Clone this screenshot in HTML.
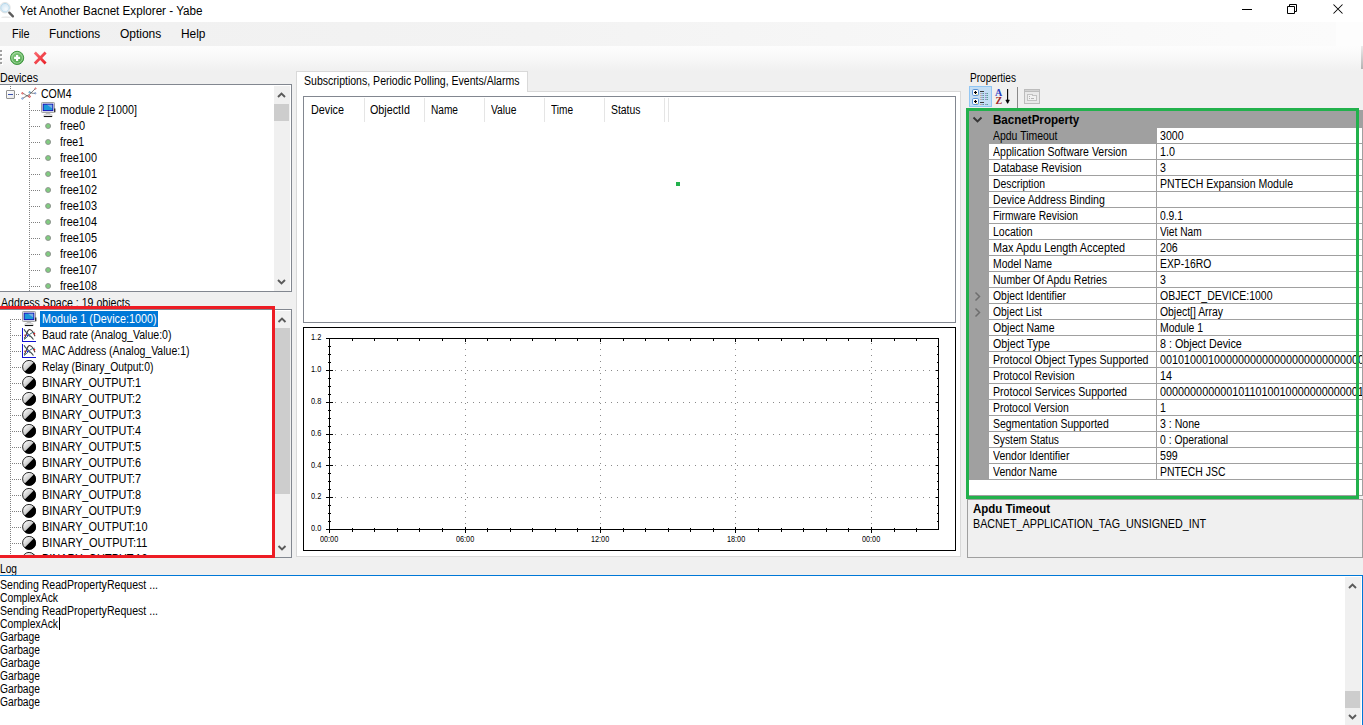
<!DOCTYPE html>
<html lang="en"><head><meta charset="utf-8"><title>Yet Another Bacnet Explorer - Yabe</title>
<style>
html,body{margin:0;padding:0}
body{width:1363px;height:725px;overflow:hidden;background:#f0f0f0;position:relative;
 font-family:"Liberation Sans",sans-serif;font-size:11px;color:#000}
.a{position:absolute}
.t{position:absolute;white-space:pre;display:block;transform-origin:0 0}
svg{position:absolute;overflow:visible}
</style></head>
<body>
<header class="a" style="left:0;top:0;width:1363px;height:22px;background:#fff"></header>
<svg style="left:0;top:0" width="16" height="20" viewBox="0 0 16 20">
<defs><radialGradient id="mg" cx="0.6" cy="0.65" r="0.7"><stop offset="0" stop-color="#f6fafd"/><stop offset="1" stop-color="#cfe4f2"/></radialGradient></defs>
<ellipse cx="6" cy="17.2" rx="5" ry="0.6" fill="#e4e4e4"/>
<circle cx="5" cy="7.7" r="5.2" fill="none" stroke="#e2e2e2" stroke-width="1"/>
<circle cx="5" cy="7.7" r="4.3" fill="url(#mg)" stroke="#b2d6ea" stroke-width="0.9"/>
<path d="M9.3 12.6 L12.9 16.4" stroke="#5c5c5c" stroke-width="2.3" stroke-linecap="round"/>
</svg>
<span class="t" style="left:19.65px;top:3.84px;font-size:12px;line-height:14px;transform:scaleX(0.9712);">Yet Another Bacnet Explorer - Yabe</span>
<svg style="left:1230px;top:0" width="133" height="22" viewBox="0 0 133 22" fill="none" stroke="#000" stroke-width="1">
<path d="M12 9.5 H22"/>
<path d="M57.5 6.5 H64.5 V13.5 H57.5 Z"/><path d="M59.5 6.5 V4.5 H66.5 V11.5 H64.5"/>
<path d="M103.5 4.5 L112.5 13.5 M112.5 4.5 L103.5 13.5" stroke-width="1.05"/>
</svg>
<nav class="a" style="left:0;top:22px;width:1336px;height:24px;background:linear-gradient(90deg,#f0f0f0 0%,#f3f3f3 40%,#fbfbfb 100%)"></nav>
<div class="a" style="left:1336px;top:22px;width:27px;height:24px;background:#fdfdfd"></div>
<span class="t" style="left:12.25px;top:26.84px;font-size:12px;line-height:14px;transform:scaleX(0.9099);">File</span>
<span class="t" style="left:49.25px;top:26.84px;font-size:12px;line-height:14px;transform:scaleX(0.9840);">Functions</span>
<span class="t" style="left:119.95px;top:26.84px;font-size:12px;line-height:14px;">Options</span>
<span class="t" style="left:181.35px;top:26.84px;font-size:12px;line-height:14px;transform:scaleX(0.9924);">Help</span>
<div class="a" style="left:0px;top:46px;width:1363px;height:25px;background:linear-gradient(180deg,#fdfdfd 0%,#f9f9f9 40%,#f0f0f0 100%)"></div>
<div class="a" style="left:1361px;top:46px;width:2px;height:23px;background:linear-gradient(180deg,#ececec,#b2b2b2)"></div>
<svg style="left:0;top:50px" width="4" height="16" viewBox="0 0 4 16" shape-rendering="crispEdges"><rect x="1" y="1" width="2" height="2" fill="#fff"/><rect x="0" y="0" width="2" height="2" fill="#a0a0a0"/><rect x="1" y="5" width="2" height="2" fill="#fff"/><rect x="0" y="4" width="2" height="2" fill="#a0a0a0"/><rect x="1" y="9" width="2" height="2" fill="#fff"/><rect x="0" y="8" width="2" height="2" fill="#a0a0a0"/><rect x="1" y="13" width="2" height="2" fill="#fff"/><rect x="0" y="12" width="2" height="2" fill="#a0a0a0"/></svg>
<svg style="left:9px;top:50px" width="16" height="16" viewBox="0 0 16 16">
<defs><linearGradient id="gg" x1="0" y1="0" x2="0.6" y2="1"><stop offset="0" stop-color="#8fd08a"/><stop offset="1" stop-color="#4da64a"/></linearGradient></defs>
<circle cx="8.1" cy="7.9" r="6.6" fill="url(#gg)" stroke="#3f973f" stroke-width="1"/>
<circle cx="8.1" cy="7.9" r="5.3" fill="none" stroke="#c9ebc5" stroke-width="0.6"/>
<path d="M8.1 4.9 V10.9 M5.1 7.9 H11.1" stroke="#fff" stroke-width="2.2"/>
</svg>
<svg style="left:33px;top:51px" width="14" height="14" viewBox="0 0 14 14">
<defs><linearGradient id="rg" x1="0" y1="0" x2="1" y2="1"><stop offset="0" stop-color="#fb7379"/><stop offset="1" stop-color="#e81a22"/></linearGradient></defs>
<path d="M0.8 2.6 L2.8 0.6 L7.2 5 L11.6 0.6 L13.6 2.6 L9.2 7 L13.6 11.4 L11.6 13.4 L7.2 9 L2.8 13.4 L0.8 11.4 L5.2 7 Z" fill="url(#rg)"/>
</svg>
<span class="t" style="left:0.15px;top:70.84px;font-size:12px;line-height:14px;transform:scaleX(0.8902);">Devices</span>
<section class="a" style="left:-1px;top:84px;width:293px;height:208px;box-sizing:border-box;border:1px solid #828790;background:#fff;overflow:hidden"></section>
<div class="a" style="left:0;top:85px;width:274px;height:206px;overflow:hidden"><div class="a" style="left:0;top:-85px;width:274px;height:400px">
<div class="a" style="left:10px;top:86px;width:1px;height:4px;background:repeating-linear-gradient(180deg,#808080 0 1px,transparent 1px 2px)"></div>
<div class="a" style="left:6px;top:90px;width:9px;height:9px;box-sizing:border-box;border:1px solid #919191;background:linear-gradient(135deg,#fff,#e6e6e6);border-radius:1px"></div>
<div class="a" style="left:8px;top:94px;width:5px;height:1px;background:#3b52b0"></div>
<div class="a" style="left:16px;top:94px;width:4px;height:1px;background:repeating-linear-gradient(90deg,#808080 0 1px,transparent 1px 2px)"></div>
<svg style="left:20px;top:86px" width="18" height="16" viewBox="0 0 18 16" fill="none">
<path d="M2.4 7.3 C5 7.6 6.5 10.6 9.5 10.5 M9.6 6.3 C11 6.8 12.5 7.6 15.3 7.3" stroke="#5a5a5a" stroke-width="0.8"/>
<path d="M2.4 12.5 L9.5 8.4 L15.5 2.5" stroke="#5a5a5a" stroke-width="0.8"/>
<circle cx="2.4" cy="7.3" r="0.8" fill="#fbb" stroke="#c33" stroke-width="0.6"/>
<circle cx="9.5" cy="10.5" r="0.9" fill="#fbb" stroke="#c22" stroke-width="0.7"/>
<circle cx="15.5" cy="2.5" r="0.7" fill="#fcc" stroke="#c44" stroke-width="0.6"/>
<circle cx="9.6" cy="6.3" r="0.8" fill="#bdf" stroke="#38a" stroke-width="0.6"/>
<circle cx="2.4" cy="12.5" r="0.8" fill="#cdf" stroke="#57b" stroke-width="0.6"/>
<circle cx="15.3" cy="7.3" r="0.7" fill="#cdf" stroke="#57b" stroke-width="0.6"/>
</svg>
<span class="t" style="left:41.15px;top:86.84px;font-size:12px;line-height:14px;transform:scaleX(0.8797);">COM4</span>
<div class="a" style="left:29px;top:102px;width:1px;height:190px;background:repeating-linear-gradient(180deg,#808080 0 1px,transparent 1px 2px)"></div>
<div class="a" style="left:31px;top:110px;width:10px;height:1px;background:repeating-linear-gradient(90deg,#808080 0 1px,transparent 1px 2px)"></div>
<svg style="left:41px;top:102px" width="15" height="16" viewBox="0 0 15 16">
<rect x="0.5" y="0.5" width="13" height="10" rx="0.8" fill="#e9e9e9" stroke="#a2a2a2"/>
<rect x="2.2" y="2.2" width="9.6" height="6.4" fill="#1b98d8" stroke="#1414b8" stroke-width="1"/>
<path d="M6 2.8 H11.2 V6.6 Z" fill="#9fb4e6" opacity="0.75"/>
<path d="M13.8 6.6 V10.2" stroke="#111" stroke-width="1.1"/>
<path d="M5 11 H9 L9.6 12.8 H4.4 Z" fill="#c4c4c4"/>
<ellipse cx="7" cy="13.3" rx="4.4" ry="1.2" fill="#f4f4f4" stroke="#aaa" stroke-width="0.5"/>
<path d="M2.8 14.5 H11.2" stroke="#111" stroke-width="1.1"/>
</svg>
<span class="t" style="left:59.65px;top:102.84px;font-size:12px;line-height:14px;transform:scaleX(0.8947);">module 2 [1000]</span>
<div class="a" style="left:31px;top:126px;width:10px;height:1px;background:repeating-linear-gradient(90deg,#808080 0 1px,transparent 1px 2px)"></div>
<svg style="left:44px;top:122px" width="8" height="8" viewBox="0 0 8 8"><circle cx="4.1" cy="4" r="2.5" fill="#80cc80" stroke="#8f8f8f" stroke-width="0.9"/></svg>
<span class="t" style="left:59.65px;top:118.84px;font-size:12px;line-height:14px;transform:scaleX(0.9138);">free0</span>
<div class="a" style="left:31px;top:142px;width:10px;height:1px;background:repeating-linear-gradient(90deg,#808080 0 1px,transparent 1px 2px)"></div>
<svg style="left:44px;top:138px" width="8" height="8" viewBox="0 0 8 8"><circle cx="4.1" cy="4" r="2.5" fill="#80cc80" stroke="#8f8f8f" stroke-width="0.9"/></svg>
<span class="t" style="left:59.65px;top:134.84px;font-size:12px;line-height:14px;transform:scaleX(0.8772);">free1</span>
<div class="a" style="left:31px;top:158px;width:10px;height:1px;background:repeating-linear-gradient(90deg,#808080 0 1px,transparent 1px 2px)"></div>
<svg style="left:44px;top:154px" width="8" height="8" viewBox="0 0 8 8"><circle cx="4.1" cy="4" r="2.5" fill="#80cc80" stroke="#8f8f8f" stroke-width="0.9"/></svg>
<span class="t" style="left:59.65px;top:150.84px;font-size:12px;line-height:14px;transform:scaleX(0.9090);">free100</span>
<div class="a" style="left:31px;top:174px;width:10px;height:1px;background:repeating-linear-gradient(90deg,#808080 0 1px,transparent 1px 2px)"></div>
<svg style="left:44px;top:170px" width="8" height="8" viewBox="0 0 8 8"><circle cx="4.1" cy="4" r="2.5" fill="#80cc80" stroke="#8f8f8f" stroke-width="0.9"/></svg>
<span class="t" style="left:59.65px;top:166.84px;font-size:12px;line-height:14px;transform:scaleX(0.9090);">free101</span>
<div class="a" style="left:31px;top:190px;width:10px;height:1px;background:repeating-linear-gradient(90deg,#808080 0 1px,transparent 1px 2px)"></div>
<svg style="left:44px;top:186px" width="8" height="8" viewBox="0 0 8 8"><circle cx="4.1" cy="4" r="2.5" fill="#80cc80" stroke="#8f8f8f" stroke-width="0.9"/></svg>
<span class="t" style="left:59.65px;top:182.84px;font-size:12px;line-height:14px;transform:scaleX(0.9090);">free102</span>
<div class="a" style="left:31px;top:206px;width:10px;height:1px;background:repeating-linear-gradient(90deg,#808080 0 1px,transparent 1px 2px)"></div>
<svg style="left:44px;top:202px" width="8" height="8" viewBox="0 0 8 8"><circle cx="4.1" cy="4" r="2.5" fill="#80cc80" stroke="#8f8f8f" stroke-width="0.9"/></svg>
<span class="t" style="left:59.65px;top:198.84px;font-size:12px;line-height:14px;transform:scaleX(0.9090);">free103</span>
<div class="a" style="left:31px;top:222px;width:10px;height:1px;background:repeating-linear-gradient(90deg,#808080 0 1px,transparent 1px 2px)"></div>
<svg style="left:44px;top:218px" width="8" height="8" viewBox="0 0 8 8"><circle cx="4.1" cy="4" r="2.5" fill="#80cc80" stroke="#8f8f8f" stroke-width="0.9"/></svg>
<span class="t" style="left:59.65px;top:214.84px;font-size:12px;line-height:14px;transform:scaleX(0.9090);">free104</span>
<div class="a" style="left:31px;top:238px;width:10px;height:1px;background:repeating-linear-gradient(90deg,#808080 0 1px,transparent 1px 2px)"></div>
<svg style="left:44px;top:234px" width="8" height="8" viewBox="0 0 8 8"><circle cx="4.1" cy="4" r="2.5" fill="#80cc80" stroke="#8f8f8f" stroke-width="0.9"/></svg>
<span class="t" style="left:59.65px;top:230.84px;font-size:12px;line-height:14px;transform:scaleX(0.9090);">free105</span>
<div class="a" style="left:31px;top:254px;width:10px;height:1px;background:repeating-linear-gradient(90deg,#808080 0 1px,transparent 1px 2px)"></div>
<svg style="left:44px;top:250px" width="8" height="8" viewBox="0 0 8 8"><circle cx="4.1" cy="4" r="2.5" fill="#80cc80" stroke="#8f8f8f" stroke-width="0.9"/></svg>
<span class="t" style="left:59.65px;top:246.84px;font-size:12px;line-height:14px;transform:scaleX(0.9090);">free106</span>
<div class="a" style="left:31px;top:270px;width:10px;height:1px;background:repeating-linear-gradient(90deg,#808080 0 1px,transparent 1px 2px)"></div>
<svg style="left:44px;top:266px" width="8" height="8" viewBox="0 0 8 8"><circle cx="4.1" cy="4" r="2.5" fill="#80cc80" stroke="#8f8f8f" stroke-width="0.9"/></svg>
<span class="t" style="left:59.65px;top:262.84px;font-size:12px;line-height:14px;transform:scaleX(0.9090);">free107</span>
<div class="a" style="left:31px;top:286px;width:10px;height:1px;background:repeating-linear-gradient(90deg,#808080 0 1px,transparent 1px 2px)"></div>
<svg style="left:44px;top:282px" width="8" height="8" viewBox="0 0 8 8"><circle cx="4.1" cy="4" r="2.5" fill="#80cc80" stroke="#8f8f8f" stroke-width="0.9"/></svg>
<span class="t" style="left:59.65px;top:278.84px;font-size:12px;line-height:14px;transform:scaleX(0.9090);">free108</span>
</div></div>
<div class="a" style="left:274px;top:86px;width:16px;height:205px;background:#f0f0f0"></div>
<div class="a" style="left:274px;top:104px;width:15px;height:17px;background:#cdcdcd"></div>
<svg style="left:0;top:0" width="1" height="1"><path d="M278.0 97 L281.5 93.5 L285.0 97" stroke="#5a5a5a" stroke-width="1.9" fill="none"/></svg>
<svg style="left:0;top:0" width="1" height="1"><path d="M278.0 280 L281.5 283.5 L285.0 280" stroke="#5a5a5a" stroke-width="1.9" fill="none"/></svg>
<span class="t" style="left:0.65px;top:295.84px;font-size:12px;line-height:14px;transform:scaleX(0.8830);">Address Space : 19 objects</span>
<section class="a" style="left:-1px;top:309px;width:293px;height:249px;box-sizing:border-box;border:1px solid #828790;background:#fff"></section>
<div class="a" style="left:0;top:310px;width:275px;height:247px;overflow:hidden"><div class="a" style="left:0;top:-310px;width:275px;height:700px">
<div class="a" style="left:10px;top:319px;width:1px;height:241px;background:repeating-linear-gradient(180deg,#808080 0 1px,transparent 1px 2px)"></div>
<div class="a" style="left:12px;top:319px;width:10px;height:1px;background:repeating-linear-gradient(90deg,#808080 0 1px,transparent 1px 2px)"></div>
<svg style="left:22px;top:311px" width="15" height="16" viewBox="0 0 15 16">
<rect x="0.5" y="0.5" width="13" height="10" rx="0.8" fill="#e9e9e9" stroke="#a2a2a2"/>
<rect x="2.2" y="2.2" width="9.6" height="6.4" fill="#1b98d8" stroke="#1414b8" stroke-width="1"/>
<path d="M6 2.8 H11.2 V6.6 Z" fill="#9fb4e6" opacity="0.75"/>
<path d="M13.8 6.6 V10.2" stroke="#111" stroke-width="1.1"/>
<path d="M5 11 H9 L9.6 12.8 H4.4 Z" fill="#c4c4c4"/>
<ellipse cx="7" cy="13.3" rx="4.4" ry="1.2" fill="#f4f4f4" stroke="#aaa" stroke-width="0.5"/>
<path d="M2.8 14.5 H11.2" stroke="#111" stroke-width="1.1"/>
</svg>
<div class="a" style="left:40px;top:311px;width:118px;height:16px;background:#0078d7"></div>
<span class="t" style="left:42.15px;top:311.84px;font-size:12px;line-height:14px;transform:scaleX(0.8987);color:#fff;">Module 1 (Device:1000)</span>
<div class="a" style="left:12px;top:335px;width:10px;height:1px;background:repeating-linear-gradient(90deg,#808080 0 1px,transparent 1px 2px)"></div>
<svg style="left:22px;top:327.5px" width="15" height="15" viewBox="0 0 15 15" fill="none">
<path d="M0.5 0 V13.5 H14" stroke="#1212d2" stroke-width="1" shape-rendering="crispEdges"/>
<path d="M2 10.5 C4 9.5 5 2 7.2 1.6 S11 3.5 13 8.2" stroke="#4a3a3a" stroke-width="1.1"/>
<path d="M2 1.2 C3.5 5 8 6.5 11.2 11.2" stroke="#3f5a5a" stroke-width="1.1"/>
<path d="M2 11.4 C5 10.6 7 4.6 12.6 4.2" stroke="#3b6f78" stroke-width="1"/>
<path d="M7 8.2 C8.6 8 10 9.6 11.4 11.6" stroke="#555" stroke-width="0.9"/>
<circle cx="5.6" cy="7.4" r="0.9" fill="#2222e0"/><circle cx="12.4" cy="5.6" r="0.9" fill="#e02222"/><circle cx="3" cy="7.2" r="0.8" fill="#b02020"/>
</svg>
<span class="t" style="left:42.15px;top:327.84px;font-size:12px;line-height:14px;transform:scaleX(0.8796);">Baud rate (Analog_Value:0)</span>
<div class="a" style="left:12px;top:351px;width:10px;height:1px;background:repeating-linear-gradient(90deg,#808080 0 1px,transparent 1px 2px)"></div>
<svg style="left:22px;top:343.5px" width="15" height="15" viewBox="0 0 15 15" fill="none">
<path d="M0.5 0 V13.5 H14" stroke="#1212d2" stroke-width="1" shape-rendering="crispEdges"/>
<path d="M2 10.5 C4 9.5 5 2 7.2 1.6 S11 3.5 13 8.2" stroke="#4a3a3a" stroke-width="1.1"/>
<path d="M2 1.2 C3.5 5 8 6.5 11.2 11.2" stroke="#3f5a5a" stroke-width="1.1"/>
<path d="M2 11.4 C5 10.6 7 4.6 12.6 4.2" stroke="#3b6f78" stroke-width="1"/>
<path d="M7 8.2 C8.6 8 10 9.6 11.4 11.6" stroke="#555" stroke-width="0.9"/>
<circle cx="5.6" cy="7.4" r="0.9" fill="#2222e0"/><circle cx="12.4" cy="5.6" r="0.9" fill="#e02222"/><circle cx="3" cy="7.2" r="0.8" fill="#b02020"/>
</svg>
<span class="t" style="left:42.15px;top:343.84px;font-size:12px;line-height:14px;transform:scaleX(0.8751);">MAC Address (Analog_Value:1)</span>
<div class="a" style="left:12px;top:367px;width:10px;height:1px;background:repeating-linear-gradient(90deg,#808080 0 1px,transparent 1px 2px)"></div>
<svg style="left:22px;top:360px;overflow:hidden" width="15" height="15" viewBox="0 0 15 15">
<defs><linearGradient id="bg22360" x1="0" y1="0" x2="1" y2="1"><stop offset="0.1" stop-color="#ffffff"/><stop offset="0.5" stop-color="#c8c8c8"/></linearGradient></defs>
<circle cx="7.1" cy="6.9" r="6.5" fill="url(#bg22360)" stroke="#111" stroke-width="0.9"/>
<path d="M12 2.3 A6.6 6.6 0 0 1 2.5 11.8 Z" fill="#000"/>
</svg>
<span class="t" style="left:42.15px;top:359.84px;font-size:12px;line-height:14px;transform:scaleX(0.8661);">Relay (Binary_Output:0)</span>
<div class="a" style="left:12px;top:383px;width:10px;height:1px;background:repeating-linear-gradient(90deg,#808080 0 1px,transparent 1px 2px)"></div>
<svg style="left:22px;top:376px;overflow:hidden" width="15" height="15" viewBox="0 0 15 15">
<defs><linearGradient id="bg22376" x1="0" y1="0" x2="1" y2="1"><stop offset="0.1" stop-color="#ffffff"/><stop offset="0.5" stop-color="#c8c8c8"/></linearGradient></defs>
<circle cx="7.1" cy="6.9" r="6.5" fill="url(#bg22376)" stroke="#111" stroke-width="0.9"/>
<path d="M12 2.3 A6.6 6.6 0 0 1 2.5 11.8 Z" fill="#000"/>
</svg>
<span class="t" style="left:42.15px;top:375.84px;font-size:12px;line-height:14px;transform:scaleX(0.9070);">BINARY_OUTPUT:1</span>
<div class="a" style="left:12px;top:399px;width:10px;height:1px;background:repeating-linear-gradient(90deg,#808080 0 1px,transparent 1px 2px)"></div>
<svg style="left:22px;top:392px;overflow:hidden" width="15" height="15" viewBox="0 0 15 15">
<defs><linearGradient id="bg22392" x1="0" y1="0" x2="1" y2="1"><stop offset="0.1" stop-color="#ffffff"/><stop offset="0.5" stop-color="#c8c8c8"/></linearGradient></defs>
<circle cx="7.1" cy="6.9" r="6.5" fill="url(#bg22392)" stroke="#111" stroke-width="0.9"/>
<path d="M12 2.3 A6.6 6.6 0 0 1 2.5 11.8 Z" fill="#000"/>
</svg>
<span class="t" style="left:42.15px;top:391.84px;font-size:12px;line-height:14px;transform:scaleX(0.9070);">BINARY_OUTPUT:2</span>
<div class="a" style="left:12px;top:415px;width:10px;height:1px;background:repeating-linear-gradient(90deg,#808080 0 1px,transparent 1px 2px)"></div>
<svg style="left:22px;top:408px;overflow:hidden" width="15" height="15" viewBox="0 0 15 15">
<defs><linearGradient id="bg22408" x1="0" y1="0" x2="1" y2="1"><stop offset="0.1" stop-color="#ffffff"/><stop offset="0.5" stop-color="#c8c8c8"/></linearGradient></defs>
<circle cx="7.1" cy="6.9" r="6.5" fill="url(#bg22408)" stroke="#111" stroke-width="0.9"/>
<path d="M12 2.3 A6.6 6.6 0 0 1 2.5 11.8 Z" fill="#000"/>
</svg>
<span class="t" style="left:42.15px;top:407.84px;font-size:12px;line-height:14px;transform:scaleX(0.9070);">BINARY_OUTPUT:3</span>
<div class="a" style="left:12px;top:431px;width:10px;height:1px;background:repeating-linear-gradient(90deg,#808080 0 1px,transparent 1px 2px)"></div>
<svg style="left:22px;top:424px;overflow:hidden" width="15" height="15" viewBox="0 0 15 15">
<defs><linearGradient id="bg22424" x1="0" y1="0" x2="1" y2="1"><stop offset="0.1" stop-color="#ffffff"/><stop offset="0.5" stop-color="#c8c8c8"/></linearGradient></defs>
<circle cx="7.1" cy="6.9" r="6.5" fill="url(#bg22424)" stroke="#111" stroke-width="0.9"/>
<path d="M12 2.3 A6.6 6.6 0 0 1 2.5 11.8 Z" fill="#000"/>
</svg>
<span class="t" style="left:42.15px;top:423.84px;font-size:12px;line-height:14px;transform:scaleX(0.9070);">BINARY_OUTPUT:4</span>
<div class="a" style="left:12px;top:447px;width:10px;height:1px;background:repeating-linear-gradient(90deg,#808080 0 1px,transparent 1px 2px)"></div>
<svg style="left:22px;top:440px;overflow:hidden" width="15" height="15" viewBox="0 0 15 15">
<defs><linearGradient id="bg22440" x1="0" y1="0" x2="1" y2="1"><stop offset="0.1" stop-color="#ffffff"/><stop offset="0.5" stop-color="#c8c8c8"/></linearGradient></defs>
<circle cx="7.1" cy="6.9" r="6.5" fill="url(#bg22440)" stroke="#111" stroke-width="0.9"/>
<path d="M12 2.3 A6.6 6.6 0 0 1 2.5 11.8 Z" fill="#000"/>
</svg>
<span class="t" style="left:42.15px;top:439.84px;font-size:12px;line-height:14px;transform:scaleX(0.9070);">BINARY_OUTPUT:5</span>
<div class="a" style="left:12px;top:463px;width:10px;height:1px;background:repeating-linear-gradient(90deg,#808080 0 1px,transparent 1px 2px)"></div>
<svg style="left:22px;top:456px;overflow:hidden" width="15" height="15" viewBox="0 0 15 15">
<defs><linearGradient id="bg22456" x1="0" y1="0" x2="1" y2="1"><stop offset="0.1" stop-color="#ffffff"/><stop offset="0.5" stop-color="#c8c8c8"/></linearGradient></defs>
<circle cx="7.1" cy="6.9" r="6.5" fill="url(#bg22456)" stroke="#111" stroke-width="0.9"/>
<path d="M12 2.3 A6.6 6.6 0 0 1 2.5 11.8 Z" fill="#000"/>
</svg>
<span class="t" style="left:42.15px;top:455.84px;font-size:12px;line-height:14px;transform:scaleX(0.9070);">BINARY_OUTPUT:6</span>
<div class="a" style="left:12px;top:479px;width:10px;height:1px;background:repeating-linear-gradient(90deg,#808080 0 1px,transparent 1px 2px)"></div>
<svg style="left:22px;top:472px;overflow:hidden" width="15" height="15" viewBox="0 0 15 15">
<defs><linearGradient id="bg22472" x1="0" y1="0" x2="1" y2="1"><stop offset="0.1" stop-color="#ffffff"/><stop offset="0.5" stop-color="#c8c8c8"/></linearGradient></defs>
<circle cx="7.1" cy="6.9" r="6.5" fill="url(#bg22472)" stroke="#111" stroke-width="0.9"/>
<path d="M12 2.3 A6.6 6.6 0 0 1 2.5 11.8 Z" fill="#000"/>
</svg>
<span class="t" style="left:42.15px;top:471.84px;font-size:12px;line-height:14px;transform:scaleX(0.9070);">BINARY_OUTPUT:7</span>
<div class="a" style="left:12px;top:495px;width:10px;height:1px;background:repeating-linear-gradient(90deg,#808080 0 1px,transparent 1px 2px)"></div>
<svg style="left:22px;top:488px;overflow:hidden" width="15" height="15" viewBox="0 0 15 15">
<defs><linearGradient id="bg22488" x1="0" y1="0" x2="1" y2="1"><stop offset="0.1" stop-color="#ffffff"/><stop offset="0.5" stop-color="#c8c8c8"/></linearGradient></defs>
<circle cx="7.1" cy="6.9" r="6.5" fill="url(#bg22488)" stroke="#111" stroke-width="0.9"/>
<path d="M12 2.3 A6.6 6.6 0 0 1 2.5 11.8 Z" fill="#000"/>
</svg>
<span class="t" style="left:42.15px;top:487.84px;font-size:12px;line-height:14px;transform:scaleX(0.9070);">BINARY_OUTPUT:8</span>
<div class="a" style="left:12px;top:511px;width:10px;height:1px;background:repeating-linear-gradient(90deg,#808080 0 1px,transparent 1px 2px)"></div>
<svg style="left:22px;top:504px;overflow:hidden" width="15" height="15" viewBox="0 0 15 15">
<defs><linearGradient id="bg22504" x1="0" y1="0" x2="1" y2="1"><stop offset="0.1" stop-color="#ffffff"/><stop offset="0.5" stop-color="#c8c8c8"/></linearGradient></defs>
<circle cx="7.1" cy="6.9" r="6.5" fill="url(#bg22504)" stroke="#111" stroke-width="0.9"/>
<path d="M12 2.3 A6.6 6.6 0 0 1 2.5 11.8 Z" fill="#000"/>
</svg>
<span class="t" style="left:42.15px;top:503.84px;font-size:12px;line-height:14px;transform:scaleX(0.9070);">BINARY_OUTPUT:9</span>
<div class="a" style="left:12px;top:527px;width:10px;height:1px;background:repeating-linear-gradient(90deg,#808080 0 1px,transparent 1px 2px)"></div>
<svg style="left:22px;top:520px;overflow:hidden" width="15" height="15" viewBox="0 0 15 15">
<defs><linearGradient id="bg22520" x1="0" y1="0" x2="1" y2="1"><stop offset="0.1" stop-color="#ffffff"/><stop offset="0.5" stop-color="#c8c8c8"/></linearGradient></defs>
<circle cx="7.1" cy="6.9" r="6.5" fill="url(#bg22520)" stroke="#111" stroke-width="0.9"/>
<path d="M12 2.3 A6.6 6.6 0 0 1 2.5 11.8 Z" fill="#000"/>
</svg>
<span class="t" style="left:42.15px;top:519.84px;font-size:12px;line-height:14px;transform:scaleX(0.9108);">BINARY_OUTPUT:10</span>
<div class="a" style="left:12px;top:543px;width:10px;height:1px;background:repeating-linear-gradient(90deg,#808080 0 1px,transparent 1px 2px)"></div>
<svg style="left:22px;top:536px;overflow:hidden" width="15" height="15" viewBox="0 0 15 15">
<defs><linearGradient id="bg22536" x1="0" y1="0" x2="1" y2="1"><stop offset="0.1" stop-color="#ffffff"/><stop offset="0.5" stop-color="#c8c8c8"/></linearGradient></defs>
<circle cx="7.1" cy="6.9" r="6.5" fill="url(#bg22536)" stroke="#111" stroke-width="0.9"/>
<path d="M12 2.3 A6.6 6.6 0 0 1 2.5 11.8 Z" fill="#000"/>
</svg>
<span class="t" style="left:42.15px;top:535.84px;font-size:12px;line-height:14px;transform:scaleX(0.9179);">BINARY_OUTPUT:11</span>
<div class="a" style="left:12px;top:559px;width:10px;height:1px;background:repeating-linear-gradient(90deg,#808080 0 1px,transparent 1px 2px)"></div>
<svg style="left:22px;top:552px;overflow:hidden" width="15" height="15" viewBox="0 0 15 15">
<defs><linearGradient id="bg22552" x1="0" y1="0" x2="1" y2="1"><stop offset="0.1" stop-color="#ffffff"/><stop offset="0.5" stop-color="#c8c8c8"/></linearGradient></defs>
<circle cx="7.1" cy="6.9" r="6.5" fill="url(#bg22552)" stroke="#111" stroke-width="0.9"/>
<path d="M12 2.3 A6.6 6.6 0 0 1 2.5 11.8 Z" fill="#000"/>
</svg>
<span class="t" style="left:42.15px;top:551.84px;font-size:12px;line-height:14px;transform:scaleX(0.9108);">BINARY_OUTPUT:12</span>
</div></div>
<div class="a" style="left:275px;top:311px;width:16px;height:246px;background:#f0f0f0"></div>
<div class="a" style="left:275px;top:328px;width:15px;height:166px;background:#cdcdcd"></div>
<svg style="left:0;top:0" width="1" height="1"><path d="M278.5 322 L282 318.5 L285.5 322" stroke="#5a5a5a" stroke-width="1.9" fill="none"/></svg>
<svg style="left:0;top:0" width="1" height="1"><path d="M278.5 546 L282 549.5 L285.5 546" stroke="#5a5a5a" stroke-width="1.9" fill="none"/></svg>
<div class="a" style="left:-3px;top:306px;width:278px;height:252px;box-sizing:border-box;border:3px solid #ed1c24"></div>
<main class="a" style="left:296px;top:91px;width:665px;height:466px;box-sizing:border-box;border:1px solid #d9d9d9;background:#fff"></main>
<div class="a" style="left:296px;top:71px;width:232px;height:21px;box-sizing:border-box;border:1px solid #d9d9d9;border-bottom:none;background:#fff"></div>
<span class="t" style="left:303.65px;top:73.84px;font-size:12px;line-height:14px;transform:scaleX(0.8780);">Subscriptions, Periodic Polling, Events/Alarms</span>
<div class="a" style="left:303px;top:96px;width:653px;height:227px;box-sizing:border-box;border:1px solid #828790;background:#fff"></div>
<div class="a" style="left:364px;top:98px;width:1px;height:24px;background:#e5e5e5"></div>
<div class="a" style="left:424px;top:98px;width:1px;height:24px;background:#e5e5e5"></div>
<div class="a" style="left:484px;top:98px;width:1px;height:24px;background:#e5e5e5"></div>
<div class="a" style="left:544px;top:98px;width:1px;height:24px;background:#e5e5e5"></div>
<div class="a" style="left:604px;top:98px;width:1px;height:24px;background:#e5e5e5"></div>
<div class="a" style="left:664px;top:98px;width:1px;height:24px;background:#e5e5e5"></div>
<div class="a" style="left:668px;top:98px;width:1px;height:24px;background:#e5e5e5"></div>
<span class="t" style="left:311.15px;top:102.84px;font-size:12px;line-height:14px;transform:scaleX(0.8995);">Device</span>
<span class="t" style="left:369.95px;top:102.84px;font-size:12px;line-height:14px;transform:scaleX(0.8948);">ObjectId</span>
<span class="t" style="left:430.85px;top:102.84px;font-size:12px;line-height:14px;transform:scaleX(0.8433);">Name</span>
<span class="t" style="left:491.15px;top:102.84px;font-size:12px;line-height:14px;transform:scaleX(0.8553);">Value</span>
<span class="t" style="left:550.85px;top:102.84px;font-size:12px;line-height:14px;transform:scaleX(0.8386);">Time</span>
<span class="t" style="left:610.65px;top:102.84px;font-size:12px;line-height:14px;transform:scaleX(0.8669);">Status</span>
<div class="a" style="left:676px;top:182px;width:4px;height:4px;background:#22b14c"></div>
<div class="a" style="left:303px;top:327px;width:653px;height:224px;box-sizing:border-box;border:1px solid #000;background:#fff"></div>
<svg style="left:0;top:0" width="1363" height="725" viewBox="0 0 1363 725" shape-rendering="crispEdges"><path d="M334.5 370.3 H935.5" stroke="#8a8a8a" stroke-width="1" stroke-dasharray="1 5"/><path d="M334.5 402.2 H935.5" stroke="#8a8a8a" stroke-width="1" stroke-dasharray="1 5"/><path d="M334.5 434.0 H935.5" stroke="#8a8a8a" stroke-width="1" stroke-dasharray="1 5"/><path d="M334.5 465.8 H935.5" stroke="#8a8a8a" stroke-width="1" stroke-dasharray="1 5"/><path d="M334.5 497.7 H935.5" stroke="#8a8a8a" stroke-width="1" stroke-dasharray="1 5"/><path d="M465.0 342.5 V526.5" stroke="#8a8a8a" stroke-width="1" stroke-dasharray="1 5"/><path d="M600.5 342.5 V526.5" stroke="#8a8a8a" stroke-width="1" stroke-dasharray="1 5"/><path d="M735.9 342.5 V526.5" stroke="#8a8a8a" stroke-width="1" stroke-dasharray="1 5"/><path d="M871.4 342.5 V526.5" stroke="#8a8a8a" stroke-width="1" stroke-dasharray="1 5"/><path d="M329.5 338.5 H938.5 V529.5 H329.5 Z" fill="none" stroke="#000" stroke-width="1"/><path d="M326.0 338.5 H333.0" stroke="#000" stroke-width="1"/><path d="M935.5 338.5 H938.5" stroke="#000" stroke-width="1"/><path d="M328.0 346.5 H331.0" stroke="#000" stroke-width="1"/><path d="M936.5 346.5 H938.5" stroke="#000" stroke-width="1"/><path d="M328.0 354.4 H331.0" stroke="#000" stroke-width="1"/><path d="M936.5 354.4 H938.5" stroke="#000" stroke-width="1"/><path d="M328.0 362.4 H331.0" stroke="#000" stroke-width="1"/><path d="M936.5 362.4 H938.5" stroke="#000" stroke-width="1"/><path d="M326.0 370.3 H333.0" stroke="#000" stroke-width="1"/><path d="M935.5 370.3 H938.5" stroke="#000" stroke-width="1"/><path d="M328.0 378.3 H331.0" stroke="#000" stroke-width="1"/><path d="M936.5 378.3 H938.5" stroke="#000" stroke-width="1"/><path d="M328.0 386.2 H331.0" stroke="#000" stroke-width="1"/><path d="M936.5 386.2 H938.5" stroke="#000" stroke-width="1"/><path d="M328.0 394.2 H331.0" stroke="#000" stroke-width="1"/><path d="M936.5 394.2 H938.5" stroke="#000" stroke-width="1"/><path d="M326.0 402.2 H333.0" stroke="#000" stroke-width="1"/><path d="M935.5 402.2 H938.5" stroke="#000" stroke-width="1"/><path d="M328.0 410.1 H331.0" stroke="#000" stroke-width="1"/><path d="M936.5 410.1 H938.5" stroke="#000" stroke-width="1"/><path d="M328.0 418.1 H331.0" stroke="#000" stroke-width="1"/><path d="M936.5 418.1 H938.5" stroke="#000" stroke-width="1"/><path d="M328.0 426.0 H331.0" stroke="#000" stroke-width="1"/><path d="M936.5 426.0 H938.5" stroke="#000" stroke-width="1"/><path d="M326.0 434.0 H333.0" stroke="#000" stroke-width="1"/><path d="M935.5 434.0 H938.5" stroke="#000" stroke-width="1"/><path d="M328.0 442.0 H331.0" stroke="#000" stroke-width="1"/><path d="M936.5 442.0 H938.5" stroke="#000" stroke-width="1"/><path d="M328.0 449.9 H331.0" stroke="#000" stroke-width="1"/><path d="M936.5 449.9 H938.5" stroke="#000" stroke-width="1"/><path d="M328.0 457.9 H331.0" stroke="#000" stroke-width="1"/><path d="M936.5 457.9 H938.5" stroke="#000" stroke-width="1"/><path d="M326.0 465.8 H333.0" stroke="#000" stroke-width="1"/><path d="M935.5 465.8 H938.5" stroke="#000" stroke-width="1"/><path d="M328.0 473.8 H331.0" stroke="#000" stroke-width="1"/><path d="M936.5 473.8 H938.5" stroke="#000" stroke-width="1"/><path d="M328.0 481.8 H331.0" stroke="#000" stroke-width="1"/><path d="M936.5 481.8 H938.5" stroke="#000" stroke-width="1"/><path d="M328.0 489.7 H331.0" stroke="#000" stroke-width="1"/><path d="M936.5 489.7 H938.5" stroke="#000" stroke-width="1"/><path d="M326.0 497.7 H333.0" stroke="#000" stroke-width="1"/><path d="M935.5 497.7 H938.5" stroke="#000" stroke-width="1"/><path d="M328.0 505.6 H331.0" stroke="#000" stroke-width="1"/><path d="M936.5 505.6 H938.5" stroke="#000" stroke-width="1"/><path d="M328.0 513.6 H331.0" stroke="#000" stroke-width="1"/><path d="M936.5 513.6 H938.5" stroke="#000" stroke-width="1"/><path d="M328.0 521.5 H331.0" stroke="#000" stroke-width="1"/><path d="M936.5 521.5 H938.5" stroke="#000" stroke-width="1"/><path d="M326.0 529.5 H333.0" stroke="#000" stroke-width="1"/><path d="M935.5 529.5 H938.5" stroke="#000" stroke-width="1"/><path d="M329.5 526.5 V532.5" stroke="#000" stroke-width="1"/><path d="M329.5 338.5 V341.5" stroke="#000" stroke-width="1"/><path d="M352.1 527.5 V531.5" stroke="#000" stroke-width="1"/><path d="M352.1 338.5 V340.5" stroke="#000" stroke-width="1"/><path d="M374.7 527.5 V531.5" stroke="#000" stroke-width="1"/><path d="M374.7 338.5 V340.5" stroke="#000" stroke-width="1"/><path d="M397.2 527.5 V531.5" stroke="#000" stroke-width="1"/><path d="M397.2 338.5 V340.5" stroke="#000" stroke-width="1"/><path d="M419.8 527.5 V531.5" stroke="#000" stroke-width="1"/><path d="M419.8 338.5 V340.5" stroke="#000" stroke-width="1"/><path d="M442.4 527.5 V531.5" stroke="#000" stroke-width="1"/><path d="M442.4 338.5 V340.5" stroke="#000" stroke-width="1"/><path d="M465.0 526.5 V532.5" stroke="#000" stroke-width="1"/><path d="M465.0 338.5 V341.5" stroke="#000" stroke-width="1"/><path d="M487.6 527.5 V531.5" stroke="#000" stroke-width="1"/><path d="M487.6 338.5 V340.5" stroke="#000" stroke-width="1"/><path d="M510.1 527.5 V531.5" stroke="#000" stroke-width="1"/><path d="M510.1 338.5 V340.5" stroke="#000" stroke-width="1"/><path d="M532.7 527.5 V531.5" stroke="#000" stroke-width="1"/><path d="M532.7 338.5 V340.5" stroke="#000" stroke-width="1"/><path d="M555.3 527.5 V531.5" stroke="#000" stroke-width="1"/><path d="M555.3 338.5 V340.5" stroke="#000" stroke-width="1"/><path d="M577.9 527.5 V531.5" stroke="#000" stroke-width="1"/><path d="M577.9 338.5 V340.5" stroke="#000" stroke-width="1"/><path d="M600.5 526.5 V532.5" stroke="#000" stroke-width="1"/><path d="M600.5 338.5 V341.5" stroke="#000" stroke-width="1"/><path d="M623.0 527.5 V531.5" stroke="#000" stroke-width="1"/><path d="M623.0 338.5 V340.5" stroke="#000" stroke-width="1"/><path d="M645.6 527.5 V531.5" stroke="#000" stroke-width="1"/><path d="M645.6 338.5 V340.5" stroke="#000" stroke-width="1"/><path d="M668.2 527.5 V531.5" stroke="#000" stroke-width="1"/><path d="M668.2 338.5 V340.5" stroke="#000" stroke-width="1"/><path d="M690.8 527.5 V531.5" stroke="#000" stroke-width="1"/><path d="M690.8 338.5 V340.5" stroke="#000" stroke-width="1"/><path d="M713.3 527.5 V531.5" stroke="#000" stroke-width="1"/><path d="M713.3 338.5 V340.5" stroke="#000" stroke-width="1"/><path d="M735.9 526.5 V532.5" stroke="#000" stroke-width="1"/><path d="M735.9 338.5 V341.5" stroke="#000" stroke-width="1"/><path d="M758.5 527.5 V531.5" stroke="#000" stroke-width="1"/><path d="M758.5 338.5 V340.5" stroke="#000" stroke-width="1"/><path d="M781.1 527.5 V531.5" stroke="#000" stroke-width="1"/><path d="M781.1 338.5 V340.5" stroke="#000" stroke-width="1"/><path d="M803.7 527.5 V531.5" stroke="#000" stroke-width="1"/><path d="M803.7 338.5 V340.5" stroke="#000" stroke-width="1"/><path d="M826.2 527.5 V531.5" stroke="#000" stroke-width="1"/><path d="M826.2 338.5 V340.5" stroke="#000" stroke-width="1"/><path d="M848.8 527.5 V531.5" stroke="#000" stroke-width="1"/><path d="M848.8 338.5 V340.5" stroke="#000" stroke-width="1"/><path d="M871.4 526.5 V532.5" stroke="#000" stroke-width="1"/><path d="M871.4 338.5 V341.5" stroke="#000" stroke-width="1"/><path d="M894.0 527.5 V531.5" stroke="#000" stroke-width="1"/><path d="M894.0 338.5 V340.5" stroke="#000" stroke-width="1"/><path d="M916.6 527.5 V531.5" stroke="#000" stroke-width="1"/><path d="M916.6 338.5 V340.5" stroke="#000" stroke-width="1"/></svg>
<span class="t" style="left:311px;top:332.25px;font-size:8.5px;line-height:10px;transform:scaleX(0.8708);">1.2</span>
<span class="t" style="left:311px;top:364.09px;font-size:8.5px;line-height:10px;transform:scaleX(0.8708);">1.0</span>
<span class="t" style="left:311px;top:395.92px;font-size:8.5px;line-height:10px;transform:scaleX(0.8708);">0.8</span>
<span class="t" style="left:311px;top:427.75px;font-size:8.5px;line-height:10px;transform:scaleX(0.8708);">0.6</span>
<span class="t" style="left:311px;top:459.59px;font-size:8.5px;line-height:10px;transform:scaleX(0.8708);">0.4</span>
<span class="t" style="left:311px;top:491.42px;font-size:8.5px;line-height:10px;transform:scaleX(0.8708);">0.2</span>
<span class="t" style="left:311px;top:523.25px;font-size:8.5px;line-height:10px;transform:scaleX(0.8708);">0.0</span>
<span class="t" style="left:320.3px;top:534.05px;font-size:8.5px;line-height:10px;transform:scaleX(0.8552);">00:00</span>
<span class="t" style="left:455.775px;top:534.05px;font-size:8.5px;line-height:10px;transform:scaleX(0.8552);">06:00</span>
<span class="t" style="left:591.25px;top:534.05px;font-size:8.5px;line-height:10px;transform:scaleX(0.8552);">12:00</span>
<span class="t" style="left:726.725px;top:534.05px;font-size:8.5px;line-height:10px;transform:scaleX(0.8552);">18:00</span>
<span class="t" style="left:862.2px;top:534.05px;font-size:8.5px;line-height:10px;transform:scaleX(0.8552);">00:00</span>
<span class="t" style="left:969.65px;top:70.84px;font-size:12px;line-height:14px;transform:scaleX(0.8409);">Properties</span>
<div class="a" style="left:969px;top:86px;width:23px;height:21px;box-sizing:border-box;border:1px solid #92c6f3;background:#c4def4"></div>
<svg style="left:972px;top:89px" width="18" height="17" viewBox="0 0 18 17">
<rect x="0.5" y="0.5" width="6" height="6" rx="1.3" fill="#fff" stroke="#5b93d6" stroke-width="1"/><path d="M2 3.5 H5 M3.5 2 V5" stroke="#000" stroke-width="1.2"/><rect x="4.2" y="5" width="1.6" height="0.9" fill="#ecd873"/>
<rect x="0.5" y="9.5" width="6" height="6" rx="1.3" fill="#fff" stroke="#5b93d6" stroke-width="1"/><path d="M2 12.5 H5 M3.5 11 V14" stroke="#000" stroke-width="1.2"/><rect x="4.2" y="14" width="1.6" height="0.9" fill="#ecd873"/>
<path d="M8 2.5 H12 M8 13.5 H12" stroke="#3c3c3c" stroke-width="1"/>
<g stroke-width="1">
<path d="M8 4.5 H9.4 M8 6.5 H9.4 M8 8.5 H9.4 M8 10.5 H9.4 M8 15.5 H9.4" stroke="#c4b48e"/><path d="M9.4 4.5 H10.8 M9.4 6.5 H10.8 M9.4 8.5 H10.8 M9.4 10.5 H10.8 M9.4 15.5 H10.8" stroke="#9c88c6"/><path d="M10.8 4.5 H12 M10.8 6.5 H12 M10.8 8.5 H12 M10.8 10.5 H12 M10.8 15.5 H12" stroke="#5ba596"/>
<path d="M13 4.5 H14.6 M13 6.5 H14.6 M13 8.5 H14.6 M13 10.5 H14.6 M13 15.5 H14.6" stroke="#9c88c6"/><path d="M14.6 4.5 H16 M14.6 6.5 H16 M14.6 8.5 H16 M14.6 10.5 H16 M14.6 15.5 H16" stroke="#5ba596"/>
</g>
</svg>
<span class="t" style="left:995px;top:86.53px;font-size:10px;line-height:12px;font-weight:bold;color:#2a3fc0;font-family:'Liberation Serif',serif;">A</span>
<span class="t" style="left:995.6px;top:94.53px;font-size:10px;line-height:12px;font-weight:bold;color:#a02828;font-family:'Liberation Serif',serif;">Z</span>
<svg style="left:1003px;top:88px" width="9" height="18" viewBox="0 0 9 18"><path d="M4.6 1 V15" stroke="#000" stroke-width="1.1"/><path d="M2.8 12 L4.6 15.4 L6.4 12 Z" stroke="#000" stroke-width="0.6" fill="#000"/></svg>
<div class="a" style="left:1017px;top:87px;width:1px;height:21px;background:#8a8a8a"></div>
<svg style="left:1024px;top:89px" width="17" height="16" viewBox="0 0 17 16" shape-rendering="crispEdges">
<rect x="0.5" y="0.5" width="15" height="14" fill="#e9e9e9" stroke="#bcbcbc"/>
<rect x="0.5" y="0.5" width="15" height="2" fill="#d2d2d2" stroke="#bcbcbc"/>
<path d="M3.5 6.5 V5.5 H8.5 V6.5 H12.5 V11.5 H3.5 Z" fill="#f1f1f1" stroke="#c2c2c2"/>
<path d="M5 7.5 H6 M5 9.5 H6 M7 9.5 H10" stroke="#b4b4b4"/>
</svg>
<div class="a" style="left:967px;top:110px;width:396px;height:386px;box-sizing:border-box;border:1px solid #a0a0a0;background:#fff"></div>
<div class="a" style="left:968px;top:111px;width:394px;height:17px;background:#a0a0a0"></div>
<div class="a" style="left:968px;top:128px;width:21px;height:352px;background:#a0a0a0"></div>
<div class="a" style="left:989px;top:128px;width:168px;height:16px;background:#a0a0a0"></div>
<div class="a" style="left:1156px;top:128px;width:1px;height:352px;background:#a0a0a0"></div>
<svg style="left:0;top:0" width="1" height="1"><path d="M973.5 117.5 L977.5 121.5 L981.5 117.5" stroke="#363636" stroke-width="1.9" fill="none"/></svg>
<span class="t" style="left:993.15px;top:112.84px;font-size:12px;line-height:14px;transform:scaleX(0.9656);font-weight:bold;">BacnetProperty</span>
<div class="a" style="left:968px;top:111px;width:394px;height:384px;overflow:hidden"><div class="a" style="left:-968px;top:-111px;width:1400px;height:600px">
<div class="a" style="left:989px;top:143px;width:373px;height:1px;background:#a0a0a0"></div>
<span class="t" style="left:992.65px;top:128.84px;font-size:12px;line-height:14px;transform:scaleX(0.8711);">Apdu Timeout</span>
<span class="t" style="left:1159.65px;top:128.84px;font-size:12px;line-height:14px;transform:scaleX(0.8838);">3000</span>
<div class="a" style="left:989px;top:159px;width:373px;height:1px;background:#a0a0a0"></div>
<span class="t" style="left:992.65px;top:144.84px;font-size:12px;line-height:14px;transform:scaleX(0.8772);">Application Software Version</span>
<span class="t" style="left:1159.65px;top:144.84px;font-size:12px;line-height:14px;transform:scaleX(0.8989);">1.0</span>
<div class="a" style="left:989px;top:175px;width:373px;height:1px;background:#a0a0a0"></div>
<span class="t" style="left:992.65px;top:160.84px;font-size:12px;line-height:14px;transform:scaleX(0.8805);">Database Revision</span>
<span class="t" style="left:1159.65px;top:160.84px;font-size:12px;line-height:14px;transform:scaleX(0.8846);">3</span>
<div class="a" style="left:989px;top:191px;width:373px;height:1px;background:#a0a0a0"></div>
<span class="t" style="left:992.65px;top:176.84px;font-size:12px;line-height:14px;transform:scaleX(0.8662);">Description</span>
<span class="t" style="left:1159.65px;top:176.84px;font-size:12px;line-height:14px;transform:scaleX(0.8784);">PNTECH Expansion Module</span>
<div class="a" style="left:989px;top:207px;width:373px;height:1px;background:#a0a0a0"></div>
<span class="t" style="left:992.65px;top:192.84px;font-size:12px;line-height:14px;transform:scaleX(0.8821);">Device Address Binding</span>
<div class="a" style="left:989px;top:223px;width:373px;height:1px;background:#a0a0a0"></div>
<span class="t" style="left:992.65px;top:208.84px;font-size:12px;line-height:14px;transform:scaleX(0.8555);">Firmware Revision</span>
<span class="t" style="left:1159.65px;top:208.84px;font-size:12px;line-height:14px;transform:scaleX(0.8613);">0.9.1</span>
<div class="a" style="left:989px;top:239px;width:373px;height:1px;background:#a0a0a0"></div>
<span class="t" style="left:992.65px;top:224.84px;font-size:12px;line-height:14px;transform:scaleX(0.8749);">Location</span>
<span class="t" style="left:1159.65px;top:224.84px;font-size:12px;line-height:14px;transform:scaleX(0.8486);">Viet Nam</span>
<div class="a" style="left:989px;top:255px;width:373px;height:1px;background:#a0a0a0"></div>
<span class="t" style="left:992.65px;top:240.84px;font-size:12px;line-height:14px;transform:scaleX(0.9034);">Max Apdu Length Accepted</span>
<span class="t" style="left:1159.65px;top:240.84px;font-size:12px;line-height:14px;transform:scaleX(0.8836);">206</span>
<div class="a" style="left:989px;top:271px;width:373px;height:1px;background:#a0a0a0"></div>
<span class="t" style="left:992.65px;top:256.84px;font-size:12px;line-height:14px;transform:scaleX(0.8672);">Model Name</span>
<span class="t" style="left:1159.65px;top:256.84px;font-size:12px;line-height:14px;transform:scaleX(0.8625);">EXP-16RO</span>
<div class="a" style="left:989px;top:287px;width:373px;height:1px;background:#a0a0a0"></div>
<span class="t" style="left:992.65px;top:272.84px;font-size:12px;line-height:14px;transform:scaleX(0.8720);">Number Of Apdu Retries</span>
<span class="t" style="left:1159.65px;top:272.84px;font-size:12px;line-height:14px;transform:scaleX(0.8846);">3</span>
<div class="a" style="left:989px;top:303px;width:373px;height:1px;background:#a0a0a0"></div>
<span class="t" style="left:992.65px;top:288.84px;font-size:12px;line-height:14px;transform:scaleX(0.8686);">Object Identifier</span>
<span class="t" style="left:1159.65px;top:288.84px;font-size:12px;line-height:14px;transform:scaleX(0.8740);">OBJECT_DEVICE:1000</span>
<svg style="left:0;top:0" width="1" height="1"><path d="M975.5 292.5 L979.5 296.5 L975.5 300.5" stroke="#6e6e6e" stroke-width="1.5" fill="none"/></svg>
<div class="a" style="left:989px;top:319px;width:373px;height:1px;background:#a0a0a0"></div>
<span class="t" style="left:992.65px;top:304.84px;font-size:12px;line-height:14px;transform:scaleX(0.8641);">Object List</span>
<span class="t" style="left:1159.65px;top:304.84px;font-size:12px;line-height:14px;transform:scaleX(0.8665);">Object[] Array</span>
<svg style="left:0;top:0" width="1" height="1"><path d="M975.5 308.5 L979.5 312.5 L975.5 316.5" stroke="#6e6e6e" stroke-width="1.5" fill="none"/></svg>
<div class="a" style="left:989px;top:335px;width:373px;height:1px;background:#a0a0a0"></div>
<span class="t" style="left:992.65px;top:320.84px;font-size:12px;line-height:14px;transform:scaleX(0.8782);">Object Name</span>
<span class="t" style="left:1159.65px;top:320.84px;font-size:12px;line-height:14px;transform:scaleX(0.8709);">Module 1</span>
<div class="a" style="left:989px;top:351px;width:373px;height:1px;background:#a0a0a0"></div>
<span class="t" style="left:992.65px;top:336.84px;font-size:12px;line-height:14px;transform:scaleX(0.8930);">Object Type</span>
<span class="t" style="left:1159.65px;top:336.84px;font-size:12px;line-height:14px;transform:scaleX(0.8952);">8 : Object Device</span>
<div class="a" style="left:989px;top:367px;width:373px;height:1px;background:#a0a0a0"></div>
<span class="t" style="left:992.65px;top:352.84px;font-size:12px;line-height:14px;transform:scaleX(0.8841);">Protocol Object Types Supported</span>
<span class="t" style="left:1159.65px;top:352.84px;font-size:12px;line-height:14px;transform:scaleX(0.8990);">0010100010000000000000000000000000000000000000000000000</span>
<div class="a" style="left:989px;top:383px;width:373px;height:1px;background:#a0a0a0"></div>
<span class="t" style="left:992.65px;top:368.84px;font-size:12px;line-height:14px;transform:scaleX(0.8750);">Protocol Revision</span>
<span class="t" style="left:1159.65px;top:368.84px;font-size:12px;line-height:14px;transform:scaleX(0.8982);">14</span>
<div class="a" style="left:989px;top:399px;width:373px;height:1px;background:#a0a0a0"></div>
<span class="t" style="left:992.65px;top:384.84px;font-size:12px;line-height:14px;transform:scaleX(0.8810);">Protocol Services Supported</span>
<span class="t" style="left:1159.65px;top:384.84px;font-size:12px;line-height:14px;transform:scaleX(0.9020);">0000000000001011010010000000000001000000</span>
<div class="a" style="left:989px;top:415px;width:373px;height:1px;background:#a0a0a0"></div>
<span class="t" style="left:992.65px;top:400.84px;font-size:12px;line-height:14px;transform:scaleX(0.8674);">Protocol Version</span>
<span class="t" style="left:1159.65px;top:400.84px;font-size:12px;line-height:14px;transform:scaleX(0.8846);">1</span>
<div class="a" style="left:989px;top:431px;width:373px;height:1px;background:#a0a0a0"></div>
<span class="t" style="left:992.65px;top:416.84px;font-size:12px;line-height:14px;transform:scaleX(0.8715);">Segmentation Supported</span>
<span class="t" style="left:1159.65px;top:416.84px;font-size:12px;line-height:14px;transform:scaleX(0.8815);">3 : None</span>
<div class="a" style="left:989px;top:447px;width:373px;height:1px;background:#a0a0a0"></div>
<span class="t" style="left:992.65px;top:432.84px;font-size:12px;line-height:14px;transform:scaleX(0.8530);">System Status</span>
<span class="t" style="left:1159.65px;top:432.84px;font-size:12px;line-height:14px;transform:scaleX(0.8638);">0 : Operational</span>
<div class="a" style="left:989px;top:463px;width:373px;height:1px;background:#a0a0a0"></div>
<span class="t" style="left:992.65px;top:448.84px;font-size:12px;line-height:14px;transform:scaleX(0.8741);">Vendor Identifier</span>
<span class="t" style="left:1159.65px;top:448.84px;font-size:12px;line-height:14px;transform:scaleX(0.8836);">599</span>
<div class="a" style="left:989px;top:479px;width:373px;height:1px;background:#a0a0a0"></div>
<span class="t" style="left:992.65px;top:464.84px;font-size:12px;line-height:14px;transform:scaleX(0.8720);">Vendor Name</span>
<span class="t" style="left:1159.65px;top:464.84px;font-size:12px;line-height:14px;transform:scaleX(0.8693);">PNTECH JSC</span>
</div></div>
<div class="a" style="left:967px;top:499px;width:396px;height:59px;box-sizing:border-box;border:1px solid #a0a0a0;background:#f0f0f0"></div>
<span class="t" style="left:972.65px;top:501.84px;font-size:12px;line-height:14px;transform:scaleX(0.9573);font-weight:bold;">Apdu Timeout</span>
<span class="t" style="left:972.65px;top:516.84px;font-size:12px;line-height:14px;transform:scaleX(0.8952);">BACNET_APPLICATION_TAG_UNSIGNED_INT</span>
<div class="a" style="left:966px;top:108px;width:393px;height:391px;box-sizing:border-box;border:3px solid #22b14c"></div>
<span class="t" style="left:0.15px;top:561.84px;font-size:12px;line-height:14px;transform:scaleX(0.8487);">Log</span>
<footer class="a" style="left:-1px;top:575px;width:1364px;height:160px;box-sizing:border-box;border:1px solid #0078d7;background:#fff"></footer>
<span class="t" style="left:0.15px;top:577.84px;font-size:12px;line-height:14px;transform:scaleX(0.8805);">Sending ReadPropertyRequest ...</span>
<span class="t" style="left:0.15px;top:590.84px;font-size:12px;line-height:14px;transform:scaleX(0.8611);">ComplexAck</span>
<span class="t" style="left:0.15px;top:603.84px;font-size:12px;line-height:14px;transform:scaleX(0.8805);">Sending ReadPropertyRequest ...</span>
<span class="t" style="left:0.15px;top:616.84px;font-size:12px;line-height:14px;transform:scaleX(0.8611);">ComplexAck</span>
<span class="t" style="left:0.15px;top:629.84px;font-size:12px;line-height:14px;transform:scaleX(0.8565);">Garbage</span>
<span class="t" style="left:0.15px;top:642.84px;font-size:12px;line-height:14px;transform:scaleX(0.8565);">Garbage</span>
<span class="t" style="left:0.15px;top:655.84px;font-size:12px;line-height:14px;transform:scaleX(0.8565);">Garbage</span>
<span class="t" style="left:0.15px;top:668.84px;font-size:12px;line-height:14px;transform:scaleX(0.8565);">Garbage</span>
<span class="t" style="left:0.15px;top:681.84px;font-size:12px;line-height:14px;transform:scaleX(0.8565);">Garbage</span>
<span class="t" style="left:0.15px;top:694.84px;font-size:12px;line-height:14px;transform:scaleX(0.8565);">Garbage</span>
<div class="a" style="left:59px;top:617px;width:1px;height:13px;background:#000"></div>
<div class="a" style="left:1345px;top:577px;width:16px;height:148px;background:#f0f0f0"></div>
<div class="a" style="left:1345px;top:691px;width:15px;height:17px;background:#cdcdcd"></div>
<svg style="left:0;top:0" width="1" height="1"><path d="M1349.0 588 L1352.5 584.5 L1356.0 588" stroke="#5a5a5a" stroke-width="1.9" fill="none"/></svg>
<svg style="left:0;top:0" width="1" height="1"><path d="M1349.0 715 L1352.5 718.5 L1356.0 715" stroke="#5a5a5a" stroke-width="1.9" fill="none"/></svg>
</body></html>
